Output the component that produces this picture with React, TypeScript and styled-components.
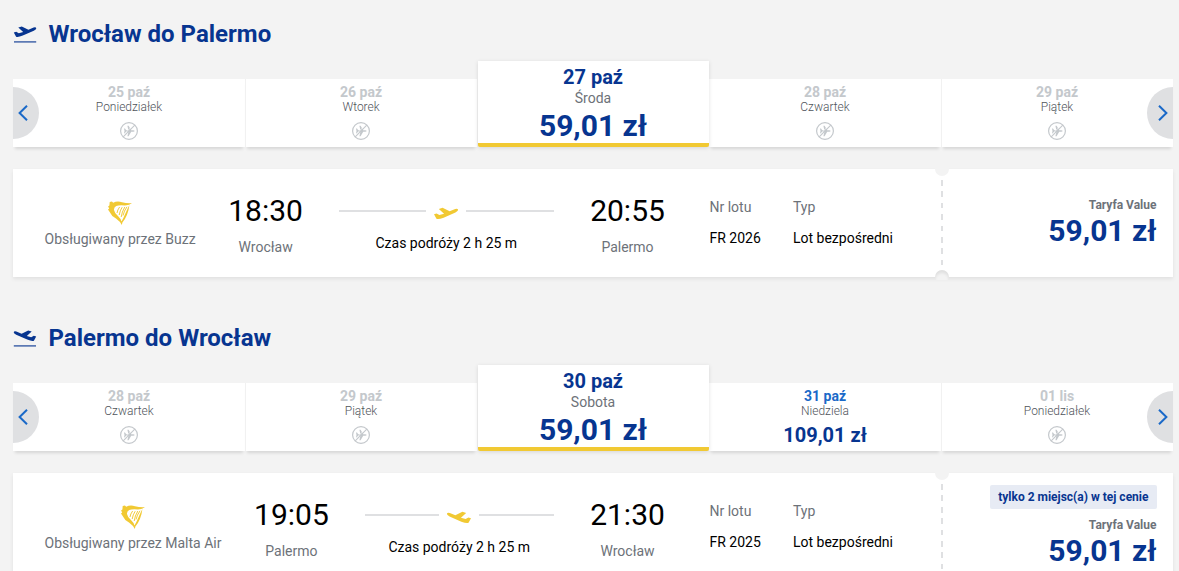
import styled, { createGlobalStyle, ThemeProvider } from "styled-components";

const theme = {
    colors: {
        background: "#f3f3f3",
        primary: "#073590",
        link: "#1a69c8",
        accent: "#f1c933",
        text: "#000",
        secondaryText: "#6d7279",
        weekday: "#4f545b",
        disabled: "#c4c8cc",
        line: "#dfe0e2",
        badge: "#e7ebf4",
    },
};

type Theme = typeof theme;

type Day = {
    date: string;
    weekday: string;
    price?: string;
    selected?: boolean;
};

type Direction = "out" | "in";

type Flight = {
    direction: Direction;
    origin: string;
    destination: string;
    days: Day[];
    carrier: string;
    departure: string;
    arrival: string;
    duration: string;
    number: string;
    price: string;
    notice?: string;
};

const flights: Flight[] = [
    {
        direction: "out",
        origin: "Wrocław",
        destination: "Palermo",
        days: [
            { date: "25 paź", weekday: "Poniedziałek" },
            { date: "26 paź", weekday: "Wtorek" },
            { date: "27 paź", weekday: "Środa", price: "59,01 zł", selected: true },
            { date: "28 paź", weekday: "Czwartek" },
            { date: "29 paź", weekday: "Piątek" },
        ],
        carrier: "Buzz",
        departure: "18:30",
        arrival: "20:55",
        duration: "2 h 25 m",
        number: "FR 2026",
        price: "59,01 zł",
    },
    {
        direction: "in",
        origin: "Palermo",
        destination: "Wrocław",
        days: [
            { date: "28 paź", weekday: "Czwartek" },
            { date: "29 paź", weekday: "Piątek" },
            { date: "30 paź", weekday: "Sobota", price: "59,01 zł", selected: true },
            { date: "31 paź", weekday: "Niedziela", price: "109,01 zł" },
            { date: "01 lis", weekday: "Poniedziałek" },
        ],
        carrier: "Malta Air",
        departure: "19:05",
        arrival: "21:30",
        duration: "2 h 25 m",
        number: "FR 2025",
        price: "59,01 zł",
        notice: "tylko 2 miejsc(a) w tej cenie",
    },
];

const GlobalStyle = createGlobalStyle<{ theme: Theme }>`
    * {
        box-sizing: border-box;
    }

    body {
        margin: 0;
        background: ${props => props.theme.colors.background};
        font-family: Roboto, "Liberation Sans", sans-serif;
        font-size: 14px;
        line-height: 20px;
    }
`;

const Page = styled.main`
    height: 571px;
    padding: 18px 6px 0 13px;
    overflow: hidden;
`;

const Journey = styled.section`
    height: 304px;
`;

const Title = styled.h2`
    display: flex;
    align-items: center;
    gap: 11.5px;
    height: 32px;
    margin: 0 0 11px;
    color: ${props => props.theme.colors.primary};
    font-size: 24px;
    font-weight: 700;
    line-height: 32px;
`;

const DayList = styled.div`
    position: relative;
    display: flex;
    align-items: flex-end;
    height: 86px;
    margin-bottom: 22px;
`;

const DayItem = styled.div<{ $active: boolean }>`
    display: flex;
    flex-direction: column;
    align-items: center;
    width: 232px;
    height: 68px;
    padding: 5px 1px 0 0;
    background: #fff;
    border-left: 1px solid #f1f1f1;
    box-shadow: 0 4px 3px -2px rgba(0, 0, 0, 0.12);
    color: ${props => props.$active ? props.theme.colors.link : props.theme.colors.disabled};

    &:first-of-type {
        border-left-color: #fff;
    }
`;

const SelectedDay = styled(DayItem)`
    z-index: 1;
    width: 231px;
    height: 86px;
    margin-left: 1px;
    padding-top: 6px;
    border-left: 0;
    border-bottom: 4px solid ${props => props.theme.colors.accent};
    border-radius: 0 0 2px 2px;
    box-shadow: 0 1px 4px rgba(0, 0, 0, 0.12);
    color: ${props => props.theme.colors.primary};

    & + div {
        border-left-color: #fff;
    }
`;

const DayDate = styled.span<{ $large?: boolean }>`
    font-size: ${props => props.$large ? 20 : 14}px;
    font-weight: 700;
    line-height: ${props => props.$large ? 21 : 16}px;
`;

const Weekday = styled.span<{ $large?: boolean }>`
    color: ${props => props.$large ? props.theme.colors.secondaryText : props.theme.colors.weekday};
    font-size: ${props => props.$large ? 14 : 12}px;
    font-weight: ${props => props.$large ? 400 : 300};
    line-height: ${props => props.$large ? 20 : 14}px;
`;

const DayPrice = styled.span<{ $large?: boolean }>`
    margin-top: ${props => props.$large ? 0 : 5}px;
    color: ${props => props.theme.colors.primary};
    font-size: ${props => props.$large ? 30 : 20}px;
    font-weight: 700;
    line-height: ${props => props.$large ? 36 : 24}px;
`;

const Arrow = styled.button<{ $side: "left" | "right" }>`
    position: absolute;
    z-index: 2;
    top: 26px;
    ${props => props.$side}: 0;
    display: flex;
    align-items: center;
    justify-content: center;
    width: 26px;
    height: 52px;
    padding: 0;
    border: 0;
    border-radius: ${props => props.$side === "left" ? "0 26px 26px 0" : "26px 0 0 26px"};
    background: ${props => props.theme.colors.line};
    color: ${props => props.theme.colors.link};

    svg {
        transform: ${props => props.$side === "left" ? "translateX(-3px)" : "translateX(3px) scaleX(-1)"};
    }
`;

const Card = styled.article<{ $tall: boolean }>`
    display: flex;
    height: ${props => props.$tall ? 128 : 108}px;
    background: #fff;
    box-shadow: 0 2px 4px rgba(0, 0, 0, 0.08);
`;

const Details = styled.div`
    display: flex;
    align-items: flex-start;
    width: 928px;
    padding: 25px 0 0 31.5px;
`;

const Carrier = styled.div`
    display: flex;
    flex-direction: column;
    align-items: center;
    gap: 4px;
    padding-top: 7px;
    color: ${props => props.theme.colors.secondaryText};
    white-space: nowrap;
`;

const Stop = styled.div`
    display: flex;
    flex-direction: column;
    align-items: center;
    gap: 10px;
    width: 76px;
    color: ${props => props.theme.colors.secondaryText};
`;

const Departure = styled(Stop)`
    margin-left: 32px;
`;

const Arrival = styled(Stop)`
    margin-right: 44px;
`;

const Time = styled.span`
    color: ${props => props.theme.colors.text};
    font-size: 30px;
    line-height: 33px;
`;

const Route = styled.div`
    flex: 1;
    margin: 0 36px 0 35.5px;
    padding-top: 5px;
    color: ${props => props.theme.colors.text};
    text-align: center;
`;

const RouteLine = styled.div`
    display: flex;
    align-items: center;
    gap: 8px;
    height: 24px;
    margin-bottom: 10px;

    &::before,
    &::after {
        content: "";
        flex: 1;
        height: 2px;
        background: ${props => props.theme.colors.line};
    }
`;

const Info = styled.dl<{ $width: number }>`
    width: ${props => props.$width}px;
    margin: 3px 32px 0 0;
    white-space: nowrap;
`;

const InfoLabel = styled.dt`
    color: ${props => props.theme.colors.secondaryText};
`;

const InfoValue = styled.dd`
    margin: 11px 0 0;
    color: ${props => props.theme.colors.text};
`;

const Perforation = styled.div`
    position: relative;
    width: 2px;
    background: repeating-linear-gradient(
        to bottom,
        ${props => props.theme.colors.line} 0 5.3px,
        transparent 5.3px 11px,
        ${props => props.theme.colors.line} 11px 11.4px
    );

    &::before,
    &::after {
        content: "";
        position: absolute;
        left: -6px;
        width: 14px;
        height: 10px;
        background: ${props => props.theme.colors.background};
    }

    &::before {
        top: -3px;
        border-radius: 0 0 7px 7px;
    }

    &::after {
        bottom: -3px;
        border-radius: 7px 7px 0 0;
        box-shadow: inset 0 3px 3px rgba(0, 0, 0, 0.08);
    }
`;

const Fare = styled.div<{ $tall: boolean }>`
    display: flex;
    flex: 1;
    flex-direction: column;
    align-items: flex-end;
    padding: ${props => props.$tall ? 12 : 28}px 16.5px 0 0;
`;

const Notice = styled.span`
    height: 24px;
    margin-bottom: 8px;
    padding: 0 8px;
    border-radius: 2px;
    background: ${props => props.theme.colors.badge};
    color: ${props => props.theme.colors.primary};
    font-size: 12px;
    font-weight: 700;
    line-height: 24px;
`;

const FareName = styled.span`
    color: ${props => props.theme.colors.secondaryText};
    font-size: 12px;
    font-weight: 700;
    line-height: 16px;
`;

const FarePrice = styled.span`
    color: ${props => props.theme.colors.primary};
    font-size: 30px;
    font-weight: 700;
    line-height: 35px;
`;

const PlaneIcon = styled.svg<{ $direction: Direction }>`
    flex: none;
    fill: currentColor;
    transform: ${props => props.$direction === "in" ? "scaleX(-1)" : "none"};
`;

const RoutePlane = styled(PlaneIcon)`
    color: ${props => props.theme.colors.accent};
`;

const HarpSvg = styled.svg`
    fill: ${props => props.theme.colors.accent};
    stroke: ${props => props.theme.colors.accent};
`;

const NoFlightSvg = styled.svg`
    margin-top: 8px;
    fill: none;
    stroke: currentColor;
`;

const planePath = "M.8 10.4 3.2 9.7 5.8 11.2 10.2 9.9 5.3 5.5 8.8 4.4 15.4 7.7 20.6 5.6Q22.9 4.9 23.3 6.2 23.3 7.6 20.8 8.7L9.8 13.6Q5 15.5 3.1 14.7Z";

const Chevron = () => (
    <svg width="10" height="16" viewBox="0 0 10 16" fill="none" stroke="currentColor" strokeWidth="2">
        <path d="M9 .8 1.6 8 9 15.2"/>
    </svg>
);

const Harp = () => (
    <HarpSvg width="24" height="24" viewBox="0 0 24 24">
        <path d="M1.7 1 3.9.6 5.2 1.8Q9-.2 14 1.2 19 2.5 24 2.1 21.8 4.4 17 4.5 11 4 8.2 5 5.8 6.4 6 9 6.6 12.6 10.4 15.6 12.8 17.8 13.5 20.4 15.6 17 17.4 12.6 19.3 8 21.4 4 20.8 9.3 19 13.7 16.9 18.8 14.4 21.4L13.8 24Q12 20.4 8 17.6 3.3 14.9 1.5 10.7L0 8.6 1.2 7.5.1 5.6 1.4 4.4Z" stroke="none"/>
        <path d="M11.6 6Q9.4 9 9 12M14.2 6.2Q11.9 9.6 11.2 14M16.8 6Q13.8 11 13.2 16M19 5.8Q16 10 15 14.5" fill="none" strokeWidth=".95"/>
    </HarpSvg>
);

const NoFlight = () => (
    <NoFlightSvg width="18" height="18" viewBox="0 0 18 18">
        <circle cx="9" cy="9" r="8.4" strokeWidth="1.2"/>
        <path d="M4 6.5H5L6.2 8.2H8.4L7.4 3.8H8.6L11.2 8.2H13.2Q14.6 8.4 14.6 9 14.6 9.6 13.2 9.8H11.2L8.6 14.2H7.4L8.4 9.8H6.2L5 11.5H4L4.5 9Z" fill="currentColor" stroke="none"/>
        <path d="M3.2 13.2 13.2 3.2" stroke="#fff" strokeWidth=".7"/>
        <path d="M3.2 14.8 14.8 3.2" strokeWidth="1.1"/>
    </NoFlightSvg>
);

const DayCell = ({ day }: { day: Day }) => {
    const Cell = day.selected ? SelectedDay : DayItem;

    return (
        <Cell $active={!!day.price}>
            <DayDate $large={day.selected}>{day.date}</DayDate>
            <Weekday $large={day.selected}>{day.weekday}</Weekday>
            {day.price ? <DayPrice $large={day.selected}>{day.price}</DayPrice> : <NoFlight/>}
        </Cell>
    );
};

const FlightCard = ({ flight }: { flight: Flight }) => (
    <Card $tall={!!flight.notice}>
        <Details>
            <Carrier>
                <Harp/>
                <span>Obsługiwany przez {flight.carrier}</span>
            </Carrier>
            <Departure>
                <Time>{flight.departure}</Time>
                <span>{flight.origin}</span>
            </Departure>
            <Route>
                <RouteLine>
                    <RoutePlane $direction={flight.direction} width="24" height="24" viewBox=".8 -3.8 22.4 22.4">
                        <path d={planePath}/>
                    </RoutePlane>
                </RouteLine>
                Czas podróży {flight.duration}
            </Route>
            <Arrival>
                <Time>{flight.arrival}</Time>
                <span>{flight.destination}</span>
            </Arrival>
            <Info $width={51.5}>
                <InfoLabel>Nr lotu</InfoLabel>
                <InfoValue>{flight.number}</InfoValue>
            </Info>
            <Info $width={116}>
                <InfoLabel>Typ</InfoLabel>
                <InfoValue>Lot bezpośredni</InfoValue>
            </Info>
        </Details>
        <Perforation/>
        <Fare $tall={!!flight.notice}>
            {flight.notice && <Notice>{flight.notice}</Notice>}
            <FareName>Taryfa Value</FareName>
            <FarePrice>{flight.price}</FarePrice>
        </Fare>
    </Card>
);

export default function App() {
    return (
        <ThemeProvider theme={theme}>
            <GlobalStyle/>
            <Page>
                {flights.map(flight => (
                    <Journey key={flight.number}>
                        <Title>
                            <PlaneIcon $direction={flight.direction} width="24" height="24" viewBox="0 0 24 24">
                                <path d={planePath}/>
                                <path d="M1 19.2H23.2V20.6H1Z" opacity=".8"/>
                            </PlaneIcon>
                            {flight.origin} do {flight.destination}
                        </Title>
                        <DayList>
                            <Arrow $side="left"><Chevron/></Arrow>
                            {flight.days.map(day => <DayCell day={day} key={day.date}/>)}
                            <Arrow $side="right"><Chevron/></Arrow>
                        </DayList>
                        <FlightCard flight={flight}/>
                    </Journey>
                ))}
            </Page>
        </ThemeProvider>
    );
}
